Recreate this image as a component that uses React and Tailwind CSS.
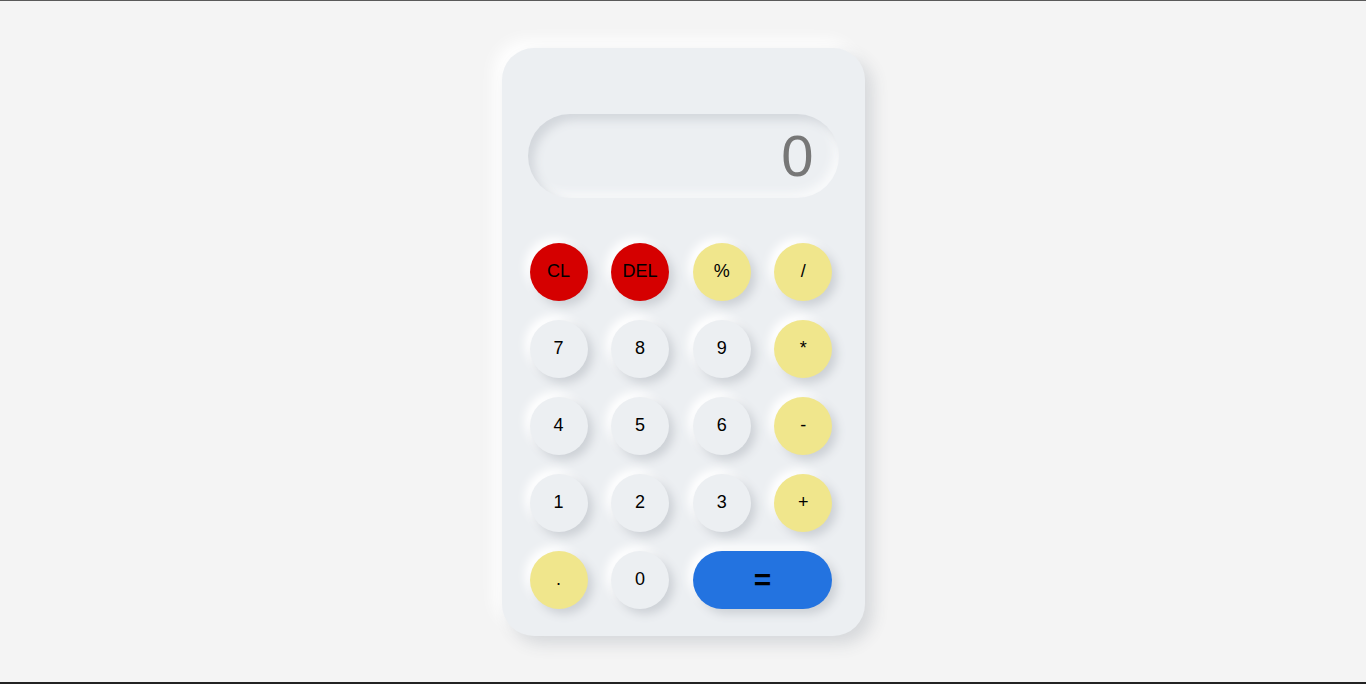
const keys = [
  { label: "CL", kind: "red" },
  { label: "DEL", kind: "red" },
  { label: "%", kind: "op" },
  { label: "/", kind: "op" },
  { label: "7" },
  { label: "8" },
  { label: "9" },
  { label: "*", kind: "op" },
  { label: "4" },
  { label: "5" },
  { label: "6" },
  { label: "-", kind: "op" },
  { label: "1" },
  { label: "2" },
  { label: "3" },
  { label: "+", kind: "op" },
  { label: ".", kind: "op" },
  { label: "0" },
];

const kindClass = {
  red: "bg-[#d50000]",
  op: "bg-[#f0e68c]",
  num: "bg-[#eceff2]",
};

function Key({ label, kind = "num" }) {
  return (
    <button
      className={`h-[58px] w-[58px] rounded-full text-[18px] text-black ${kindClass[kind]} shadow-[5px_5px_10px_#cdd1d6,-5px_-5px_10px_#ffffff]`}
    >
      {label}
    </button>
  );
}

export default function App() {
  return (
    <div className="h-[684px] w-full bg-[#f4f4f4] flex flex-col font-['Liberation_Sans',Arial,sans-serif]">
      <div className="h-px bg-[#5a5a5a]" />
      <div className="flex-1 flex items-center justify-center">
        <div className="w-[363px] h-[588px] rounded-[32px] bg-[#eceff2] px-[26px] pt-[66px] shadow-[8px_8px_16px_#d6d8db,-8px_-8px_16px_#ffffff]">
          <div className="h-[84px] rounded-[42px] bg-[#eceff2] flex items-center justify-end pr-[25px] shadow-[inset_6px_6px_10px_#d3d7dc,inset_-5px_-5px_10px_#f9fafb]">
            <span className="text-[58px] leading-none text-[#777777]">0</span>
          </div>
          <div className="mt-[45px] ml-[2px] grid grid-cols-[repeat(4,58px)] gap-x-[23.6px] gap-y-[19px]">
            {keys.map((k) => (
              <Key key={k.label} {...k} />
            ))}
            <button className="col-span-2 h-[58px] rounded-full bg-[#2373e0] text-[30px] font-bold leading-none text-black shadow-[5px_5px_10px_#cdd1d6,-5px_-5px_10px_#ffffff]">
              =
            </button>
          </div>
        </div>
      </div>
      <div className="h-[2px] bg-[#222222]" />
    </div>
  );
}
